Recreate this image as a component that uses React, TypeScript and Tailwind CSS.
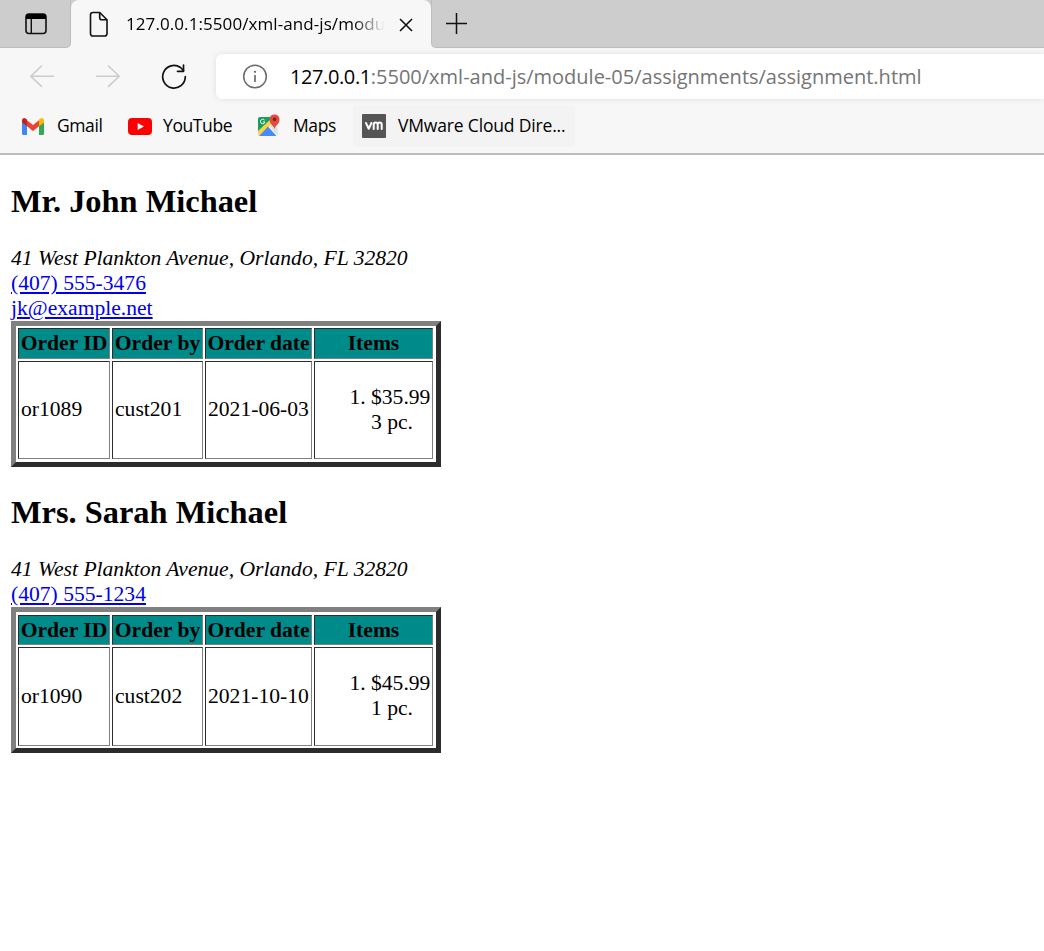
import React from "react";

const ui = "font-['Open_Sans','Noto_Sans',sans-serif]";

function TabActionsIcon() {
  return (
    <svg width="22" height="22" viewBox="0 0 22 22" className="block">
      <rect x="1" y="1" width="20" height="19.5" rx="3" fill="none" stroke="#111" strokeWidth="1.6" />
      <path d="M1 6V4a3 3 0 0 1 3-3h14a3 3 0 0 1 3 3v2z" fill="#000" />
      <path d="M6.3 6v14.5" stroke="#111" strokeWidth="1.4" />
    </svg>
  );
}

function PageIcon() {
  return (
    <svg width="20" height="26" viewBox="0 0 20 26" fill="none" stroke="#111" strokeWidth="1.6" strokeLinejoin="round" className="block">
      <path d="M3.5 1.500h7.2L18 8.800v13.900a2.300 2.300 0 0 1-2.300 2.300H3.800A2.300 2.300 0 0 1 1.500 22.700V3.800A2.300 2.300 0 0 1 3.800 1.500z" />
      <path d="M10.700 1.500v5.300a2 2 0 0 0 2 2H18" />
    </svg>
  );
}

function Arrow({ flip = false }: { flip?: boolean }) {
  return (
    <svg width="26" height="24" viewBox="0 0 26 24" fill="none" stroke="#cbcbcb" strokeWidth="1.5" strokeLinecap="round" strokeLinejoin="round" className={flip ? "block -scale-x-100" : "block"}>
      <path d="M12.500 1 1.800 11.200l10.700 10.200M1.800 11.200H24.500" />
    </svg>
  );
}

function ReloadIcon() {
  return (
    <svg width="26" height="26" viewBox="0 0 26 26" fill="none" stroke="#111" strokeWidth="1.7" strokeLinecap="round" strokeLinejoin="round" className="block">
      <path d="M24.300 12.500A11.300 11.300 0 1 1 19.500 3.500L22.500 6.500" />
      <path d="M22.500 1v6.300h-6" />
    </svg>
  );
}

function InfoIcon() {
  return (
    <svg width="26" height="26" viewBox="0 0 26 26" fill="none" stroke="#6b6b6b" className="block">
      <circle cx="13" cy="12.500" r="11.300" strokeWidth="1.500" />
      <path d="M13 11v7" strokeWidth="1.700" />
      <circle cx="13" cy="7.800" r="1.150" fill="#6b6b6b" stroke="none" />
    </svg>
  );
}

function GmailIcon() {
  return (
    <svg width="22" height="17" viewBox="0 0 22 17" className="block">
      <path d="M0 3h5v14H1.500A1.500 1.500 0 0 1 0 15.500z" fill="#4285f4" />
      <path d="M17 3h5v12.500a1.500 1.500 0 0 1-1.500 1.500H17z" fill="#34a853" />
      <path d="M5 2.300 11 7l6-4.700v6L11 13 5 8.300z" fill="#ea4335" />
      <path d="M0 4.600V2.500C0 .4 2.200-.6 3.900.7L5 1.600v6.700z" fill="#c5221f" />
      <path d="M22 4.600V2.500C22 .4 19.800-.6 18.100.7L17 1.600v6.700z" fill="#fbbc04" />
    </svg>
  );
}

function YouTubeIcon() {
  return (
    <svg width="24" height="17" viewBox="0 0 24 17" className="block">
      <rect width="24" height="17" rx="4" fill="#f00" />
      <path d="M9.700 4.900v7.200l6.200-3.600z" fill="#fff" />
    </svg>
  );
}

function MapsIcon() {
  return (
    <svg width="24" height="24" viewBox="0 0 24 24" className="block">
      <path d="M2 3h15L0 18V5a2 2 0 0 1 2-2z" fill="#17a05d" />
      <path d="M17 7 .5 22 0 17 14 4z" fill="#ffd33f" />
      <path d="m10 12.500 8.500 9.500H1z" fill="#4a8af4" />
      <path d="m11 12 4-3 4.500 5v7z" fill="#dce1e5" />
      <path d="M16.500 15.500c0-4-5-5-5-10.100a5 5 0 0 1 10 0c0 5.100-5 6.100-5 10.100z" fill="#e34b3f" />
      <circle cx="16.500" cy="5.400" r="1.800" fill="#7a241d" />
      <path d="M6.500 6a2.300 2.300 0 1 0 .5 2H5" fill="none" stroke="#fff" strokeWidth="1" />
    </svg>
  );
}

function VmIcon() {
  return (
    <svg width="24" height="24" viewBox="0 0 24 24" fill="none" stroke="#fff" strokeWidth="2" strokeLinecap="round" strokeLinejoin="round" className="block">
      <rect width="24" height="24" rx="1" fill="#555" stroke="none" />
      <path d="m4 9 2.700 5.700L9.400 9M11.700 15v-4.500a2 2 0 0 1 4 0V15m0-4.500a2 2 0 0 1 4 0V15" />
    </svg>
  );
}

function BrowserChrome() {
  return (
    <header className={`h-[155px] bg-[#f7f7f7] border-b-2 border-[#bdbdbd] text-black ${ui}`}>
      <div className="flex h-12">
        <div className="flex w-[71px] items-center rounded-br-[5px] border-b border-r border-[#bdbdbd] bg-[#cdcdcd] pl-[25px]">
          <TabActionsIcon />
        </div>
        <div className="w-[360px] bg-linear-to-b from-[#cdcdcd] from-50% to-[#f7f7f7] to-50%">
          <div className="flex h-12 items-center rounded-t-lg bg-[#f7f7f7] pl-[18px]">
            <PageIcon />
            <div className="ml-[17px] w-[261px] whitespace-nowrap bg-linear-to-r from-black from-87% to-transparent to-99% bg-clip-text text-[17px] leading-6 tracking-[0.08px] text-transparent">
              127.0.0.1:5500/xml-and-js/modul
            </div>
            <svg width="14" height="14" viewBox="0 0 14 14" stroke="#111" strokeWidth="1.600" className="ml-[12px] mt-px block">
              <path d="m1 1 12 12M13 1 1 13" />
            </svg>
          </div>
        </div>
        <div className="flex flex-1 items-center rounded-bl-[5px] border-b border-l border-[#bdbdbd] bg-[#cdcdcd] pl-[14px]">
          <svg width="22" height="22" viewBox="0 0 22 22" stroke="#111" strokeWidth="1.500" className="block">
            <path d="M10.500 0v21M0 10.500h21" />
          </svg>
        </div>
      </div>
      <div className="flex h-[57px] items-center pl-[29px]">
        <Arrow />
        <div className="ml-10"><Arrow flip /></div>
        <div className="ml-10"><ReloadIcon /></div>
        <div className="ml-[29px] flex h-[45px] flex-1 items-center rounded-l-md bg-white pl-[26px] shadow-[0_0_6px_rgba(0,0,0,0.1)]">
          <InfoIcon />
          <span className="ml-[22px] whitespace-nowrap text-[20px] leading-7 text-[#757575]">
            <span className="tracking-[-0.4px] text-black">127.0.0.1</span>:5500/xml-and-js/module-05/assignments/assignment.html
          </span>
        </div>
      </div>
      <nav className="flex h-[42px] items-center whitespace-nowrap pl-[22px] text-[17.5px] leading-6 tracking-[-0.17px]">
        <GmailIcon />
        <span className="-mt-0.5 ml-[13px] w-[71px] tracking-[-0.4px]">Gmail</span>
        <YouTubeIcon />
        <span className="-mt-0.5 ml-[11px] w-[95px] tracking-[-0.4px]">YouTube</span>
        <MapsIcon />
        <span className="-mt-0.5 ml-[11px] w-[60px] tracking-[-0.4px]">Maps</span>
        <div className="flex h-[42px] w-[222px] items-center rounded bg-[#f3f3f3] pl-[9px]">
          <VmIcon />
          <span className="-mt-0.5 ml-3">VMware Cloud Dire...</span>
        </div>
      </nav>
    </header>
  );
}

type Order = { id: string; by: string; date: string; price: string; qty: string };

const cellEdge = "border border-t-[#2c2c2c] border-l-[#2c2c2c] border-b-[#808080] border-r-[#808080]";

function OrderTable({ order, frame }: { order: Order; frame: string }) {
  return (
    <div
      role="table"
      className={`grid h-[146px] w-[430px] grid-cols-[92px_91px_107px_119px] gap-0.5 border-[5px] border-t-[#808080] border-l-[#808080] border-b-[#2c2c2c] border-r-[#2c2c2c] pl-0.5 ${frame}`}
    >
      {["Order ID", "Order by", "Order date", "Items"].map((h) => (
        <div key={h} role="columnheader" className={`flex items-center justify-center whitespace-nowrap bg-[#008b8b] font-bold ${cellEdge}`}>
          {h}
        </div>
      ))}
      {[order.id, order.by, order.date].map((v) => (
        <div key={v} role="cell" className={`flex items-center whitespace-nowrap pb-px pl-0.5 ${cellEdge}`}>
          {v}
        </div>
      ))}
      <div role="cell" className={`flex items-start pt-[23px] ${cellEdge}`}>
        <ol className="ml-14 list-decimal">
          <li>
            {order.price}
            <br />
            {order.qty}
          </li>
        </ol>
      </div>
    </div>
  );
}

export default function App() {
  return (
    <div className="h-[951px] w-[1044px] overflow-hidden bg-white">
      <BrowserChrome />
      <main className="pl-[11px] pt-[27px] font-['Liberation_Serif',serif] text-[21.6px] leading-[25px] text-black">
        <h2 className="h-16 text-[32.4px] font-bold leading-[38px]">Mr. John Michael</h2>
        <address className="italic">41 West Plankton Avenue, Orlando, FL 32820</address>
        <div className="text-[#0000ee] underline">(407) 555-3476</div>
        <div className="text-[#0000ee] underline">jk@example.net</div>
        <OrderTable
          frame="grid-rows-[31px_98px] pt-0.5"
          order={{ id: "or1089", by: "cust201", date: "2021-06-03", price: "$35.99", qty: "3 pc." }}
        />
        <h2 className="mt-[26px] h-16 text-[32.4px] font-bold leading-[38px]">Mrs. Sarah Michael</h2>
        <address className="italic">41 West Plankton Avenue, Orlando, FL 32820</address>
        <div className="text-[#0000ee] underline">(407) 555-1234</div>
        <OrderTable
          frame="grid-rows-[30px_99px] pt-[3px]"
          order={{ id: "or1090", by: "cust202", date: "2021-10-10", price: "$45.99", qty: "1 pc." }}
        />
      </main>
    </div>
  );
}
